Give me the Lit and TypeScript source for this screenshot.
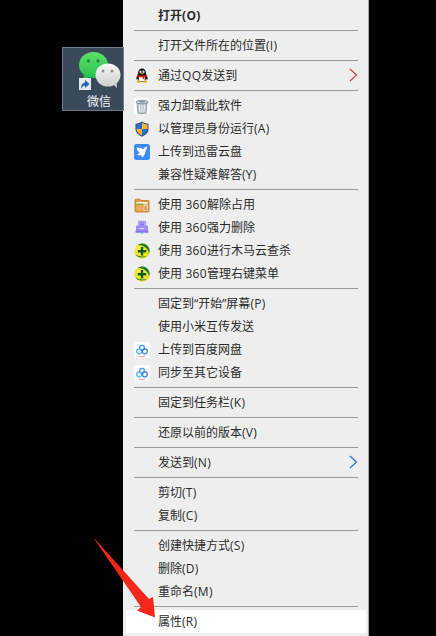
import { LitElement, html, css, svg } from "lit";
import { customElement } from "lit/decorators.js";

const qq = svg`<path d="M8 .6C5.500.6 4.200 2.400 4.200 4.600c0 1-.2 1.600-.7 2.500C2.800 8.300 2.200 9.800 2.500 11.600c.6.200 1-.3 1.200-.8.300 1.100.9 2 1.800 2.700h5c.9-.7 1.500-1.600 1.800-2.700.2.500.6 1 1.200.8.300-1.800-.3-3.300-1-4.500-.5-.9-.7-1.500-.7-2.500C11.800 2.400 10.500.6 8 .6z" fill="#111"/>
<path d="M5.300 8.500c1.800.6 3.600.6 5.400 0 .7 1.400.8 3.200-.2 4.600h-5c-1-1.400-.9-3.200-.2-4.600z" fill="#fff"/>
<ellipse cx="6.500" cy="3.900" rx="1" ry="1.300" fill="#fff"/><ellipse cx="9.500" cy="3.900" rx="1" ry="1.300" fill="#fff"/>
<circle cx="6.700" cy="4.100" r=".45" fill="#111"/><circle cx="9.300" cy="4.100" r=".45" fill="#111"/>
<path d="M6 5.300h4L8 6.600z" fill="#f5b000"/>
<path d="M3.400 6.800c3 1.300 6.200 1.300 9.200 0l.4 1.400c-.8.400-1.700.7-2.600.9l.4 2.300-2-.7-.2-1.500c-1.100.1-2.500.1-3.800-.1-.7-.2-1.300-.5-1.800-.9z" fill="#e0201a"/>
<path d="M3.200 13c.9-.4 2.100-.2 3.200.4.400.4.100 1.400-.6 1.600-1.100.2-2.200-.1-2.900-.7-.3-.4-.1-1 .3-1.300zM12.800 13c-.9-.4-2.100-.2-3.200.4-.4.400-.1 1.400.6 1.600 1.100.2 2.200-.1 2.900-.7.300-.4.100-1-.3-1.300z" fill="#f7b500"/>`;

const trash = svg`<rect width="16" height="16" fill="#fdfdfd"/>
<path d="M3 5h10l-1 10.400H4z" fill="#b9c4d0" stroke="#7d8a98" stroke-width=".7"/>
<path d="M5.500 6.500l.4 7.800M8 6.500v7.800M10.500 6.500l-.4 7.800" stroke="#eef2f6" stroke-width="1"/>
<ellipse cx="8" cy="4" rx="6" ry="1.800" fill="#d3dae2" stroke="#76838f" stroke-width=".8"/>
<ellipse cx="8" cy="3.800" rx="3.500" ry=".8" fill="#7a8793"/>`;

const shield = svg`<path d="M8 .4C6 1.800 4 2.500 1.500 2.700V8c0 3.500 2.800 6.200 6.500 7.700 3.700-1.500 6.500-4.200 6.500-7.700V2.700C12 2.500 10 1.800 8 .4z" fill="#1f4a86"/>
<path d="M8 1.400V8H2.400V3.500C4.500 3.300 6.300 2.600 8 1.400z" fill="#2d72c2"/>
<path d="M8 1.400c1.700 1.200 3.500 1.900 5.600 2.100V8H8z" fill="#f2b530"/>
<path d="M2.400 8H8v6.600C5 13.400 2.600 11 2.400 8z" fill="#f2b530"/>
<path d="M8 8h5.600c-.2 3-2.600 5.400-5.600 6.600z" fill="#2d72c2"/>`;

const thunder = svg`<rect width="16" height="16" rx="2.500" fill="#3d8bf2"/>
<path d="M13.200 2.500C11.300 3 10 4 9.200 5.200 7.200 4.400 5 3.600 2.500 3.600 3 6 4 7.600 5.500 8.600 4.800 9.600 4 10.300 3 10.900c1.500.6 3 .5 4 .1l1 2.600c2-1.500 3-3.600 3.300-5.600.8-1.900 1.600-3.500 1.900-5.500z" fill="#fff"/>`;

const folder = svg`<path d="M1 3.200c0-.6.400-1 1-1h3.700l1.300 1.300h7c.6 0 1 .4 1 1V14c0 .6-.4 1-1 1H2c-.6 0-1-.4-1-1z" fill="#e69a45" stroke="#bd7327" stroke-width=".8"/>
<rect x="2.500" y="5" width="11" height="3" fill="#fff5d8"/>
<rect x="2.500" y="6.500" width="7" height="3.500" fill="#6fb33a"/>
<rect x="2.500" y="8" width="11" height="5.700" fill="#f0ac5c"/>
<rect x="9" y="7.800" width="5.500" height="6.500" fill="#f9dcaa" stroke="#c97f30" stroke-width=".6"/>
<path d="M12.800 9.300c-1.200-.3-2 .5-2 2.200 0 1.300.6 1.800 1.200 1.800.7 0 1.200-.5 1.200-1.200 0-.7-.5-1.100-1.100-1.100-.5 0-.9.200-1.200.6" fill="none" stroke="#bd7327" stroke-width=".8"/>`;

const shred = svg`<path d="M4.500 1.200h7V6h-7z" fill="#b3a6f8" stroke="#9484f5" stroke-width=".6"/>
<path d="M6 3h4M6 4.500h4" stroke="#7763ee" stroke-width=".8"/>
<path d="M2 6.500c0-.5.400-1 1-1h10c.6 0 1 .5 1 1v5H2z" fill="#9c8ff8"/>
<rect x="1.500" y="10.500" width="13" height="2.300" rx=".5" fill="#8576f6"/>
<rect x="5.500" y="8" width="5" height="1.200" fill="#d9d3fb"/>
<path d="M5 13.200h6v1.200H5z" fill="#d7e4fb"/><path d="M7 12.300h2v1.300H7z" fill="#46a6f2"/>`;

const s360 = svg`<defs><radialGradient id="y360" cx=".45" cy=".45" r=".6"><stop offset="0" stop-color="#fff56a"/><stop offset=".8" stop-color="#f3e214"/><stop offset="1" stop-color="#c2b800"/></radialGradient></defs>
<circle cx="8" cy="8" r="7.600" fill="url(#y360)"/>
<path d="M4 2c3-2.500 8.500-2 10.800 2.500 1 2 1 4 .2 6-.6-4.500-4.500-8.200-11-8.500z" fill="#1d7d2a"/>
<path d="M1.300 11.500c2.500 3 7.500 4 11.200 1.500-3.500 1-8 .3-11.200-1.500z" fill="#2b8f2b"/>
<path d="M6.800 4h2.400v3h3v2.400h-3v3H6.800v-3h-3V7h3z" fill="#0b5c1c"/>`;

const baidu = svg`<rect width="16" height="16" rx="3" fill="#fbfdff"/>
<circle cx="8" cy="5.800" r="2.500" fill="none" stroke="#4c96f2" stroke-width="1.300"/>
<circle cx="5.200" cy="9.300" r="2.500" fill="none" stroke="#4dbbee" stroke-width="1.300"/>
<circle cx="10.800" cy="9.300" r="2.500" fill="none" stroke="#3f7ce6" stroke-width="1.300"/>
<path d="M5 14c2 .8 4 .8 6 0" fill="none" stroke="#f49ab4" stroke-width="1.300"/>`;

type Row = { t: string; i?: any; b?: boolean; sub?: "red" | "blue"; hot?: boolean } | null;

const rows: Row[] = [
  { t: "打开(O)", b: true },
  null,
  { t: "打开文件所在的位置(I)" },
  null,
  { t: "通过QQ发送到", i: qq, sub: "red" },
  null,
  { t: "强力卸载此软件", i: trash },
  { t: "以管理员身份运行(A)", i: shield },
  { t: "上传到迅雷云盘", i: thunder },
  { t: "兼容性疑难解答(Y)" },
  null,
  { t: "使用 360解除占用", i: folder },
  { t: "使用 360强力删除", i: shred },
  { t: "使用 360进行木马云查杀", i: s360 },
  { t: "使用 360管理右键菜单", i: s360 },
  null,
  { t: "固定到“开始”屏幕(P)" },
  { t: "使用小米互传发送" },
  { t: "上传到百度网盘", i: baidu },
  { t: "同步至其它设备", i: baidu },
  null,
  { t: "固定到任务栏(K)" },
  null,
  { t: "还原以前的版本(V)" },
  null,
  { t: "发送到(N)", sub: "blue" },
  null,
  { t: "剪切(T)" },
  { t: "复制(C)" },
  null,
  { t: "创建快捷方式(S)" },
  { t: "删除(D)" },
  { t: "重命名(M)" },
  null,
  { t: "属性(R)", hot: true },
];

// Latin runs sit a touch wider in the reference than in the substitute font.
const label = (t: string) =>
  t.split(/([ -~]+)/).map((part, i) => (i % 2 ? html`<span class="lat">${part}</span>` : part));

@customElement("app-root")
export class AppRoot extends LitElement {
  static styles = css`
    :host {
      display: block;
      width: 436px;
      height: 636px;
      background: #000;
      overflow: hidden;
      position: relative;
      font-family: "Open Sans", "Noto Sans CJK SC", sans-serif;
      font-size: 12px;
      color: #2b2b2b;
    }
    .desk {
      position: absolute;
      left: 62px;
      top: 47px;
      width: 62px;
      height: 64px;
      box-sizing: border-box;
      background: #3b4a5a;
      border: 1px solid #6f7d8b;
      color: #f2f6fa;
      text-align: center;
    }
    .desk svg { position: absolute; left: 0; top: 0; }
    .desk span { position: absolute; left: 12px; right: 0; top: 46px; line-height: 16px; font-size: 12px; }
    .menu {
      margin-left: 123px;
      width: 246px;
      height: 636px;
      box-sizing: border-box;
      background: #eeeeee;
      border-right: 1px solid #a6a6a6;
      padding: 4px 2px 0 3px;
    }
    .row {
      height: 23px;
      display: flex;
      align-items: center;
      position: relative;
      line-height: 23px;
      white-space: nowrap;
    }
    .row.hot { background: #fff; }
    .ic { width: 16px; height: 16px; margin-left: 8px; margin-right: 8px; flex: none; }
    .ic svg { display: block; }
    .b { font-weight: 700; }
    .lat { letter-spacing: 0.3px; }
    .sub { position: absolute; left: 223px; top: 4px; }
    .sep { height: 7px; box-sizing: border-box; padding: 3px 8px; }
    .sep i { display: block; height: 1px; background: #9a9a9a; }
    .arrow { position: absolute; left: 0; top: 0; pointer-events: none; }
  `;

  render() {
    return html`
      <div class="desk">
        <svg width="60" height="62" viewBox="63 48 60 62">
          <defs>
            <linearGradient id="wg" x1="0" y1="0" x2="0" y2="1"><stop offset="0" stop-color="#5fe06c"/><stop offset="1" stop-color="#25c24a"/></linearGradient>
            <linearGradient id="wh" x1="0" y1="0" x2="0" y2="1"><stop offset="0" stop-color="#f6f6f6"/><stop offset="1" stop-color="#cfcfcf"/></linearGradient>
          </defs>
          <ellipse cx="93.500" cy="65" rx="14.500" ry="13" fill="url(#wg)"/>
          <path d="M84 75l-1 6 6-3z" fill="#28c44c"/>
          <circle cx="88.500" cy="61" r="1.700" fill="#1f8f3c"/><circle cx="98" cy="61" r="1.700" fill="#1f8f3c"/>
          <ellipse cx="108" cy="75" rx="12.500" ry="11.500" fill="url(#wh)"/>
          <path d="M113 84l4 4-.5-6z" fill="#d2d2d2"/>
          <circle cx="103" cy="71" r="1.500" fill="#8b8b8b"/><circle cx="112" cy="71" r="1.500" fill="#8b8b8b"/>
          <rect x="79" y="78" width="12" height="12" fill="#e4e9f0"/>
          <path d="M81 89c0-4 1.200-6 4-6.500V80l4.500 4-4.500 4v-2.500c-1.500 0-3 1.200-4 3.500z" fill="#2464b8"/>
        </svg>
        <span>微信</span>
      </div>
      <div class="menu">
        ${rows.map((r) =>
          r === null
            ? html`<div class="sep"><i></i></div>`
            : html`<div class="row ${r.hot ? "hot" : ""}">
                <span class="ic">${r.i ? html`<svg width="16" height="16" viewBox="0 0 16 16">${r.i}</svg>` : ""}</span>
                <span class="${r.b ? "b" : ""}">${label(r.t)}</span>
                ${r.sub
                  ? html`<svg class="sub" width="9" height="14" viewBox="0 0 9 14"><path d="M1 1l6.500 6L1 13" fill="none" stroke="${r.sub === "red" ? "#c2403e" : "#2a73d6"}" stroke-width="1.200"/></svg>`
                  : ""}
              </div>`
        )}
      </div>
      <svg class="arrow" width="436" height="636" viewBox="0 0 436 636">
        <path d="M93 537L149 599L153 597L155 617.500L137 610.500L141 607z" fill="#f5271b"/>
      </svg>
    `;
  }
}
